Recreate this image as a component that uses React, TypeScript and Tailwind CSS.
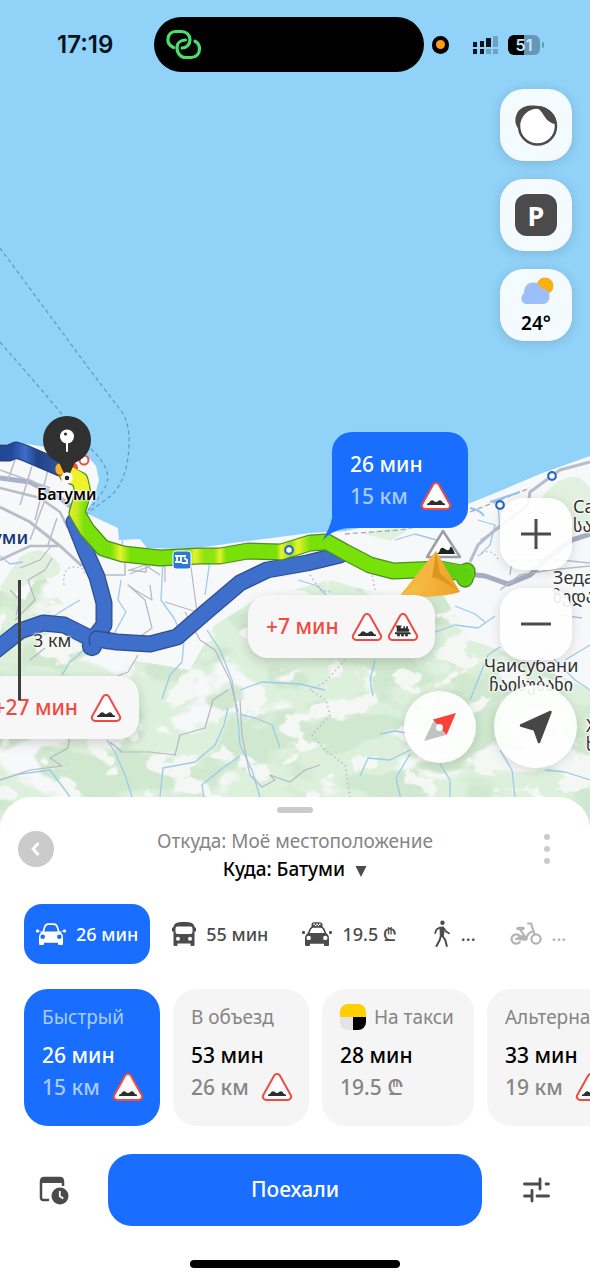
import type { ReactNode } from "react";
import clsx from "clsx";

const MAP_LABEL =
  "absolute whitespace-nowrap [text-shadow:0_0_2px_#fff,0_0_2px_#fff,0_0_3px_#fff,0_0_3px_#fff]";
const FLOATING = "flex items-center justify-center bg-white/90 shadow-[0_2px_12px_rgba(0,0,0,0.14)]";

/* ---------- Icons ---------- */

const RoadSign = ({ kind = "bump", className = "" }: { kind?: "bump" | "train"; className?: string }) => (
  <svg viewBox="0 0 32 28" className={clsx("h-7 w-8 shrink-0", className)} aria-hidden="true">
    <path
      d="M13.2 2.6a3.2 3.2 0 0 1 5.6 0l11 19.6a3.2 3.2 0 0 1-2.800 4.700H5a3.200 3.200 0 0 1-2.800-4.700z"
      fill="#fff"
      stroke="#f04a41"
      strokeWidth="2"
    />
    {kind === "bump" ? (
      <path d="M7 23v-1.500c2.800 0 2.800-3.300 5-3.300s2.200 1.800 4 1.800 1.800-1.800 4-1.800 2.200 3.300 5 3.300V23z" fill="#2e2e2e" />
    ) : (
      <g fill="#2e2e2e">
        <path d="M9 12.500h5.500v1.200h-.7v1.600h2.500v-2h1.600v2h1.200v-2h1.800v2.300c1.500.4 1.800 2.200.8 3.100H9.700v-5H9z" />
        <path d="M8 19.300h15l1 2H8z" />
        <circle cx="11.500" cy="22" r="1.500" />
        <circle cx="15.500" cy="22" r="1.500" />
        <circle cx="19.500" cy="22" r="1.500" />
      </g>
    )}
  </svg>
);

const CarIcon = () => (
  <svg viewBox="0 0 30 22" className="h-[22px] w-[30px]" fill="currentColor" aria-hidden="true">
    <path d="M7 9.500 8.700 4Q9.500 1.300 12 1.100h6q2.500.2 3.300 2.900L23 9.500" fill="none" stroke="currentColor" strokeWidth="1.700" />
    <rect x="0" y="6.500" width="3" height="3" rx="1.200" />
    <rect x="27" y="6.500" width="3" height="3" rx="1.200" />
    <path d="M3 8 6 9M27 8 24 9" stroke="currentColor" strokeWidth=".6" />
    <path
      fillRule="evenodd"
      d="M6 8.500h18q3 2 3 6V21q0 1-1 1h-3q-1 0-1-1v-1.200H8V21q0 1-1 1H4q-1 0-1-1v-6.500q0-4 3-6zM6.700 11.500a2.300 2.300 0 1 0 0 4.600 2.300 2.300 0 0 0 0-4.600zm16.600 0a2.300 2.300 0 1 0 0 4.600 2.300 2.300 0 0 0 0-4.600z"
    />
  </svg>
);

const TaxiIcon = () => (
  <svg viewBox="0 0 30 24" className="h-6 w-[30px]" fill="currentColor" aria-hidden="true">
    <path d="M9.500 5V3Q9.500.3 12.200.3h5.600q2.700 0 2.700 2.700v2z" />
    <path d="M11.500 1.500H13V3h-1.500zM14.300 1.500h1.500V3h-1.500zM17 1.500h1.500V3H17zM13 3h1.300v1.300H13zM15.800 3H17v1.300h-1.200z" fill="#fff" />
    <path d="M6.500 11.500 8.300 7Q9.200 5 11.500 5h7q2.300 0 3.200 2l1.800 4.500" fill="none" stroke="currentColor" strokeWidth="1.700" />
    <rect x="0" y="9" width="3" height="3" rx="1.200" />
    <rect x="27" y="9" width="3" height="3" rx="1.200" />
    <path
      fillRule="evenodd"
      d="M6 11h18q3 1.500 3 5.500V23q0 1-1 1h-3q-1 0-1-1v-1.200H8V23q0 1-1 1H4q-1 0-1-1v-6.500Q3 12.500 6 11zM6.700 13.700a2.200 2.200 0 1 0 0 4.400 2.200 2.200 0 0 0 0-4.400zm16.600 0a2.200 2.200 0 1 0 0 4.400 2.200 2.200 0 0 0 0-4.400z"
    />
  </svg>
);

const BusIcon = () => (
  <svg viewBox="0 0 24 24" className="size-6" fill="currentColor" aria-hidden="true">
    <path
      fillRule="evenodd"
      d="M6 .5Q12-.8 18 .5q4 .7 4.500 4.500L24 6v3.500h-1.500V23q0 1-1 1h-2q-1 0-1-1v-1.500h-13V23q0 1-1 1h-2q-1 0-1-1V9.500H0V6l1.500-1Q2 1.200 6 .5zM5.500 4.500q-2 0-2 2V10q0 2 2 2h13q2 0 2-2V6.500q0-2-2-2zM6 14.800a2 2 0 1 0 0 4 2 2 0 0 0 0-4zm12 0a2 2 0 1 0 0 4 2 2 0 0 0 0-4z"
    />
  </svg>
);

const WalkIcon = () => (
  <svg viewBox="-3 0 20 28" className="h-7 w-5" fill="none" stroke="currentColor" aria-hidden="true">
    <circle cx="8.500" cy="2.800" r="2.200" fill="currentColor" stroke="none" />
    <path d="M6 7.500 9.300 6.800l.7 5.500-1 4.300-2.700-1z" fill="currentColor" strokeWidth="1" strokeLinejoin="round" />
    <path d="M6 7.500 2.500 9.500 1.200 13M10 8.500l2 3 3 1.800" strokeWidth="1.800" strokeLinecap="round" strokeLinejoin="round" />
    <path d="M7 15.500 5.700 20 2.500 26M8.500 16l2.800 4 1.500 6" strokeWidth="2" strokeLinecap="round" strokeLinejoin="round" />
  </svg>
);

const BikeIcon = () => (
  <svg viewBox="0 0 32 24" className="h-6 w-8" fill="none" stroke="currentColor" strokeWidth="2.200" strokeLinecap="round" aria-hidden="true">
    <path d="M9.800 14a4.700 4.700 0 1 0 0 6" />
    <circle cx="26" cy="17" r="4.600" />
    <path d="M6 17h10.500q.5-6 6-7.500M10.500 8l5.500 8M18 1.500h3L24.500 12" />
    <path d="M8 6.500h5" strokeWidth="3.500" />
    <path d="M6 17q5-6 10-1.500V18z" fill="currentColor" strokeWidth="1" />
  </svg>
);

const ScheduleIcon = () => (
  <svg viewBox="0 0 32 32" className="size-8" aria-hidden="true">
    <path d="M11 26H5.500Q3 26 3 23.500v-16Q3 4 6.500 4h15Q25 4 25 7.500V12" fill="none" stroke="#4b4b4b" strokeWidth="2.500" />
    <path d="M3 9V6q0-3 3-3h16q3 0 3 3v3z" fill="#4b4b4b" />
    <circle cx="22" cy="22" r="9.500" fill="#4b4b4b" stroke="#fff" strokeWidth="2" />
    <path d="M21.800 17v5.200l3.500 2.300" fill="none" stroke="#fff" strokeWidth="1.800" />
  </svg>
);

const TuneIcon = () => (
  <svg viewBox="0 0 28 28" className="size-7" fill="none" stroke="#4b4b4b" strokeWidth="2.800" aria-hidden="true">
    <path d="M2.500 8h15M24 8h2.500M18 3v10M2.500 20H10M15 20h11.500M10 14.500V25" strokeLinecap="round" />
  </svg>
);

/* ---------- Map ---------- */

const LAND =
  "M0 444 28 444 60 450 84 452 96 466 99 480 94 498 86 513 118 528 119 540 140 539 147 548 190 549 240 542 310 533 345 531 400 520 468 504 500 491 540 474 590 456V840H0z";
const MAIN_ROUTE =
  "M67 474 80 480 83 493 77 513 87 530 103 548 123 554 160 558 200 556 220 556 248 551 281 552 310 543 327 542 345 552 370 565 393 571 417 570 440 569 467 574";
const ALT_ROUTES = [
  "M-4 650 20 631 43 623 64 625 90 638 117 642 150 644 177 637 207 611 240 583 267 570 307 563 340 555",
  "M74 522 85 550 97 577 104 603 104 625 94 638",
];

const RIVERS = [
  "M0 556 10 564 23 562M125 520 122 545M163 560 161 600 174 618 184 640 182 662 170 675 162 699",
  "M121 580 118 600 126 612 115 632 106 650M80 600 60 612 45 622M90 645 70 662 62 675",
  "M107 740 115 752 125 775 132 797M0 780 20 774 50 770 65 790 70 797M160 797 163 768 195 762 215 745 224 725 228 708",
  "M204 797 202 785 220 770 240 756M210 560 205 595M207 630 220 650 232 680 238 720 240 745 252 770 260 797M240 690 262 682 300 684 325 690",
  "M242 715 255 718 272 725 280 748M298 580 318 586 327 596M375 660 370 680 373 696",
  "M360 776 368 758 390 760 410 750M410 754 396 778 401 800M380 734 395 731 412 734M440 764 450 780 450 800",
  "M435 632 455 625 478 628 495 616M455 606 475 614 485 622M470 700 474 690 488 655 500 647",
  "M500 750 512 770 515 797M545 770 565 772 590 780M565 660 590 645M478 520 495 525 490 545 480 555",
  "M395 540 415 534 440 541M480 540 500 528 498 505M560 615 582 618M545 650 575 680 590 690",
];

const ROADS = [
  "M45 648 30 660M150 585 152 600 135 590 128 585 145 600 152 628 135 640M138 655 128 672 108 680",
  "M190 560 197 612 165 602M130 574 150 566M15 620 35 600 28 580 45 570 52 558",
  "M185 612 200 640 215 650 230 680 238 712M0 780 30 770 62 766 50 758 68 748 70 735",
  "M110 742 122 752 150 752 175 755 180 735 205 728 213 700 228 690",
  "M240 700 242 735 250 775 262 787 275 780 270 775 290 782 305 770 320 765",
  "M130 570 145 565 160 575M165 560 165 582M10 590 20 600 16 615M52 545 40 560 20 568",
];

const Terrain = () => (
  <>
    <rect y="430" width="590" height="410" fill="#f7f8f9" />
    <g clipPath="url(#hills)">
      <rect y="540" width="590" height="300" filter="url(#pale)" />
      <rect y="540" width="590" height="300" filter="url(#wood)" />
      <rect y="540" width="590" height="300" filter="url(#shade)" />
    </g>
    <path d="M20 557q20-14 35 2t-10 20-30 16-15-8zM540 500q20-28 40-22l10 10v40l-20-8-14-20zM365 534q20-8 45-5l-20 12z" fill="#dcefd8" opacity=".8" />
  </>
);

const MapDrawing = () => (
  <svg
    viewBox="0 0 590 829"
    preserveAspectRatio="xMidYMin slice"
    className="absolute inset-x-0 top-0 h-[calc(100%+32px)] w-full"
    aria-hidden="true"
  >
    <defs>
      <clipPath id="land">
        <path d={LAND} />
      </clipPath>
      <clipPath id="hills">
        <path d="M0 590 25 600 40 570 60 600 90 640 130 660 190 670 215 625 255 600 330 580 400 600 440 590 470 640 500 650 590 690V840H0z" />
      </clipPath>
      <filter id="pale" x="0" y="0" width="100%" height="100%" colorInterpolationFilters="sRGB">
        <feTurbulence type="fractalNoise" baseFrequency=".012 .018" numOctaves="4" seed="7" />
        <feColorMatrix values="0 0 0 0 .862  0 0 0 0 .94  0 0 0 0 .86  12 0 0 0 -4.200" />
      </filter>
      <filter id="wood" x="0" y="0" width="100%" height="100%" colorInterpolationFilters="sRGB">
        <feTurbulence type="fractalNoise" baseFrequency=".014 .024" numOctaves="3" seed="21" />
        <feColorMatrix values="0 0 0 0 .815  0 0 0 0 .91  0 0 0 0 .81  12 0 0 0 -5.900" />
      </filter>
      <filter id="shade" x="0" y="0" width="100%" height="100%" colorInterpolationFilters="sRGB">
        <feTurbulence type="fractalNoise" baseFrequency=".025 .036" numOctaves="4" seed="4" />
        <feColorMatrix values="0 0 0 0 .96  0 0 0 0 .97  0 0 0 0 .96  18 0 0 0 -10.600" />
      </filter>
      <linearGradient id="jam" x1="0" x2="1">
        <stop offset="0" stopColor="#1f4795" />
        <stop offset=".25" stopColor="#234a98" />
        <stop offset=".45" stopColor="#3d6dcb" />
        <stop offset=".65" stopColor="#1f4388" />
        <stop offset="1" stopColor="#35549f" />
      </linearGradient>
      <linearGradient id="slow" gradientUnits="userSpaceOnUse" x1="70" x2="310" y1="0" y2="0">
        <stop offset="0" stopColor="#d9f027" />
        <stop offset=".03" stopColor="#c3ea20" />
        <stop offset=".06" stopColor="#78e208" />
        <stop offset=".17" stopColor="#78e208" />
        <stop offset=".21" stopColor="#e4f22e" />
        <stop offset=".25" stopColor="#78e208" />
        <stop offset=".49" stopColor="#78e208" />
        <stop offset=".52" stopColor="#e4f22e" />
        <stop offset=".56" stopColor="#8ee40f" />
        <stop offset=".6" stopColor="#8ee40f" />
        <stop offset=".625" stopColor="#e4f22e" />
        <stop offset=".65" stopColor="#78e208" />
        <stop offset=".86" stopColor="#78e208" />
        <stop offset=".88" stopColor="#e4f22e" />
        <stop offset=".92" stopColor="#8ee40f" />
        <stop offset=".95" stopColor="#e4f22e" />
        <stop offset="1" stopColor="#78e208" />
      </linearGradient>
      <linearGradient id="arrow" x1="0" x2="1">
        <stop offset="0" stopColor="#fbc64e" />
        <stop offset="1" stopColor="#eda126" />
      </linearGradient>
    </defs>

    <rect width="590" height="829" fill="#91d2f8" />
    {/* Ferry lines */}
    <g fill="none" stroke="#5b9bc9" strokeWidth="1.200" strokeDasharray="4 3">
      <path d="M0 248 90 370 122 412Q130 425 129 445 128 478 112 495L86 514" />
      <path d="M0 342 40 388 92 450Q107 464 108 478 106 492 86 512" />
    </g>

    <g clipPath="url(#land)">
      <Terrain />
      <g fill="none" stroke="#9ccbeb" strokeWidth="1.300" strokeLinejoin="round">
        {RIVERS.map((d) => (
          <path key={d} d={d} />
        ))}
      </g>
      <g fill="none" stroke="#b7b6c6" strokeWidth="1.200" strokeLinejoin="round">
        {ROADS.map((d) => (
          <path key={d} d={d} />
        ))}
      </g>
      <path
        d="M345 660 325 682 310 690 326 700 330 715 312 735 325 750 345 765 350 797M375 590 372 575 385 567M310 575 320 590 332 592M478 556q12-10 20 3M64 585q-2-18 10-18t10 8"
        fill="none"
        stroke="#bdb5dc"
        strokeWidth="1.500"
        strokeDasharray="1.500 3"
      />
      <g fill="none" stroke="#b9bcca">
        <path d="M0 478 30 482 60 498 78 512" strokeWidth="5" stroke="#a9b2ca" />
        <path d="M0 507 30 522 60 546 82 566" strokeWidth="3" />
        <path d="M0 488 40 498 60 512 68 528" strokeWidth="2.500" />
        <path d="M0 560 30 546 58 546" strokeWidth="2.500" />
        <path d="M15 460 8 480M32 466 20 505M48 470 35 520M45 500 30 540M57 518 48 545M0 470 50 488M105 575 125 575 125 556M146 556 146 572 128 570" strokeWidth="1.500" />
        <path d="M468 574 485 576 508 584 530 575 548 558 572 540 590 534" stroke="#a5adc0" strokeWidth="5" />
        <path d="M470 562 478 545 495 530 528 505 530 492 560 470 590 462" strokeWidth="3" />
        <path d="M500 590 520 575 550 570 590 566M510 575 512 560 560 560 590 563" strokeWidth="1.500" />
      </g>
      <path d="M345 534 400 530 450 520 500 500 530 488" fill="none" stroke="#aaa9b3" strokeWidth="1.300" strokeDasharray="5 3" />
      <path d="M470 508q10 2 14 8M490 502l30-10" fill="none" stroke="#8fc7ee" strokeWidth="2" />
    </g>

    {/* Alternative routes */}
    <g fill="none" strokeLinejoin="round" strokeLinecap="round">
      {ALT_ROUTES.map((d) => (
        <path key={d} d={d} stroke="#2f4f8f" strokeWidth="17" />
      ))}
      <circle cx="92" cy="646" r="9.500" fill="#3e6fcb" stroke="#2f4f8f" strokeWidth="1.300" />
      {ALT_ROUTES.map((d) => (
        <path key={d} d={d} stroke="#3e6fcb" strokeWidth="14.500" />
      ))}
      <path d="M90 645q-3-12 6-14l14 2" stroke="#2f4f8f" strokeWidth="1.300" />
      <path d="M-4 453H9L16 450 25 453 60 468" stroke="#213d7c" strokeWidth="17" />
      <path d="M-4 453H9L16 450 25 453 60 468" stroke="url(#jam)" strokeWidth="14.500" />
    </g>

    {/* Selected route with slow stretches */}
    <g fill="none" strokeLinejoin="round" strokeLinecap="round">
      <circle cx="84" cy="460" r="4.500" fill="#fff" stroke="#f04a41" strokeWidth="2" />
      <path d={MAIN_ROUTE} stroke="#4f8a25" strokeWidth="17" />
      <circle cx="467" cy="571" r="8" fill="#5fd00f" stroke="#4f8a25" strokeWidth="1.300" />
      <circle cx="465" cy="579" r="8" fill="#5fd00f" stroke="#4f8a25" strokeWidth="1.300" />
      <path d={MAIN_ROUTE} stroke="url(#slow)" strokeWidth="14.500" />
      <path d="M440 569 466 574" stroke="#5fd00f" strokeWidth="14.500" />
      <path d="M62 470 72 468" stroke="#f4512c" strokeWidth="12" />
      <path d="M60 468v2" stroke="#f9b51b" strokeWidth="9" />
      <path d="M70 474 80 480 82 488" stroke="#eef229" strokeWidth="14.500" />
    </g>

    <g fill="#fff" stroke="#2d66c9" strokeWidth="2.200">
      <circle cx="289" cy="550" r="3.800" />
      <circle cx="500" cy="505" r="3.800" />
      <circle cx="552" cy="476" r="3.800" />
    </g>

    {/* Railway station */}
    <rect x="173" y="551" width="18" height="18" rx="3" fill="#2a77dd" stroke="#fff" />
    <path d="M175 556h11M175 562h7M177 556v6M181 556v6M184 558l3 2v3h-5" fill="none" stroke="#fff" strokeWidth="1.800" />

    {/* Bump warning on the route */}
    <path d="M443 531 460 557H427z" fill="#fff" stroke="#9c9da6" strokeWidth="2.500" strokeLinejoin="round" />
    <path d="M435 554q4 0 5-4t5-1 5-1 5 6z" fill="#222" />

    {/* Current position */}
    <path d="M436 551 460 592Q440 598 399 597z" fill="url(#arrow)" />
    <path d="M436 551 440 573 460 592Q447 582 432 577z" fill="#df9620" />
    <path d="M436 551 432 577Q415 584 399 597z" fill="#f5b540" />

    {/* Destination pin */}
    <path d="M67 480 58 460H76z" fill="#303030" />
    <circle cx="67" cy="440" r="24" fill="#303030" />
    <circle cx="67" cy="436.500" r="7" fill="#fff" />
    <circle cx="65.500" cy="434" r="1.600" fill="#303030" />
    <path d="M67 442V451" stroke="#fff" strokeWidth="2" strokeLinecap="round" />
    <circle cx="67" cy="478" r="4" fill="#222" stroke="#fff" strokeWidth="3.500" />
  </svg>
);

const MapLabels = () => (
  <>
    <span className={clsx(MAP_LABEL, "left-[37px] top-[484px] text-base leading-5 font-semibold text-black")}>Батуми</span>
    <span className={clsx(MAP_LABEL, "-left-2 top-[525px] text-lg leading-6 font-semibold text-[#213c78]")}>уми</span>
    <span className={clsx(MAP_LABEL, "left-[33px] top-[628px] text-lg leading-6 text-[#333]")}>3 км</span>
    <span className={clsx(MAP_LABEL, "left-[573px] top-[497px] text-lg leading-[19px] text-[#333]")}>
      Сар
      <br />
      სარ
    </span>
    <span className={clsx(MAP_LABEL, "left-[553px] top-[568px] text-lg leading-[19px] text-[#333]")}>
      Зеда
      <br />
      ზედა
    </span>
    <span className={clsx(MAP_LABEL, "left-[484px] top-[656px] text-center text-lg leading-[19px] text-[#333]")}>
      Чаисубани
      <br />
      ჩაისუბანი
    </span>
    <span className={clsx(MAP_LABEL, "left-[586px] top-[716px] text-lg leading-[19px] text-[#333]")}>
      Х<br />ხ
    </span>
  </>
);

const RouteBubbles = () => (
  <>
    <button className="absolute left-[332px] top-[432px] w-[136px] rounded-[20px] bg-[#196dff] pt-4 pr-4 pb-4 pl-[18px] text-left text-[21px] leading-8 font-medium text-white">
      <svg viewBox="0 0 30 32" className="absolute -left-[10px] top-[78px] h-8 w-[30px]" aria-hidden="true">
        <path d="M10 0v8Q8 18 0 31 12 18 30 18V0z" fill="#196dff" />
      </svg>
      <span className="relative block">26 мин</span>
      <span className="relative flex items-center justify-between">
        <span className="text-[#a9cbff]">15 км</span>
        <RoadSign />
      </span>
    </button>

    <button className="absolute left-[248px] top-[595px] flex h-[63px] w-[187px] items-center rounded-[20px] bg-[#f7f7f7] pl-[18px] text-[21px] font-medium text-[#f04a41] shadow-[0_4px_12px_rgba(0,0,0,0.16)]">
      <span className="mr-3 whitespace-nowrap">+7 мин</span>
      <RoadSign className="mr-1" />
      <RoadSign kind="train" />
    </button>

    <button className="absolute -left-5 top-[676px] flex h-[63px] w-[159px] items-center justify-end rounded-[20px] bg-[#f7f7f7] pr-[17px] text-[21px] font-medium text-[#f04a41] shadow-[0_4px_12px_rgba(0,0,0,0.16)]">
      <span className="mr-3 whitespace-nowrap">+27 мин</span>
      <RoadSign />
    </button>
    <div className="absolute left-[18px] top-[580px] h-[120px] w-[3px] bg-[#3e403e]" />
  </>
);

const StatusBar = () => (
  <header className="relative flex h-[89px] items-start justify-between pt-[17px] pr-[50px] pl-[57px]">
    <time className="flex h-[55px] w-[97px] items-center font-['Inter',sans-serif] text-2xl font-semibold text-[#061420]">17:19</time>
    <div className="flex h-[55px] w-[270px] items-center rounded-full bg-black pl-3">
      <svg viewBox="0 0 36 32" className="h-8 w-9" fill="none" stroke="#4be06c" strokeWidth="3.200" strokeLinecap="round" aria-hidden="true">
        <path d="M7.500 18.500C3 16.500 1.500 13 2 9.500 2.500 5 6 2.500 10 2.500h5.500c5 0 8.500 3.500 8.500 8.200 0 4.800-3.500 8.300-8 8.300" />
        <path d="M19.500 11c-5 0-8.500 3-8.500 8 0 5.500 4 9.500 9 9.500h5c5 0 8.500-3.500 8.500-8.500 0-3.500-1.500-6.500-4.500-7.800" />
      </svg>
    </div>
    <div className="ml-2 flex h-[55px] flex-1 items-center justify-between">
      <span className="flex h-[18px] w-[17px] items-center justify-center rounded-full bg-black">
        <span className="size-[9px] rounded-full bg-[#ff9a18]" />
      </span>
      <svg viewBox="0 0 26 20" className="ml-3 h-5 w-[26px]" fill="#06141f" aria-label="Сигнал" role="img">
        <path d="M1 7h4v5H1zM8 6h4v6H8zM14 3h5v9h-5zM1 14h4v5H1zM8 14h4v5H8z" />
        <path d="M21 1h5v11h-5zM14 14h5v5h-5zM21 14h5v5h-5z" opacity=".25" />
      </svg>
      <span className="relative flex h-5 w-8 items-center justify-center rounded-md bg-[linear-gradient(90deg,#000_51%,#6498b6_51%)] font-['Inter',sans-serif] text-base font-semibold text-[#c5e8fb]">
        51
        <span className="absolute -right-1 h-[6px] w-[2px] rounded-r-full bg-[#6498b6]" />
      </span>
    </div>
  </header>
);

const MapButton = ({ label, children }: { label: string; children: ReactNode }) => (
  <button aria-label={label} className={clsx(FLOATING, "size-[72px] flex-col rounded-3xl")}>
    {children}
  </button>
);

const MapControls = () => (
  <>
    <div className="relative flex flex-col items-end gap-[18px] pr-[18px]">
      <MapButton label="Пробки">
        <svg viewBox="0 0 44 44" className="size-11">
          <path d="M1.500 15Q4 3 17 2.500q14-.8 21 7 5.500 6 4 16l-5 6L8 29q-8-6-6.500-14z" fill="#4b4b4b" />
          <circle cx="23.500" cy="23" r="18.500" fill="#fff" stroke="#4b4b4b" strokeWidth="2.500" />
          <path d="M22 4.800q4 1 8 8 4 7 11.500 8.500Q41 8 28 3.500z" fill="#4b4b4b" />
        </svg>
      </MapButton>
      <MapButton label="Парковки">
        <span className="flex size-[42px] items-center justify-center rounded-xl bg-[#4b4b4b] text-[27px] leading-none font-bold text-white">P</span>
      </MapButton>
      <MapButton label="Погода">
        <svg viewBox="0 0 36 28" className="mt-1 h-7 w-9">
          <circle cx="27" cy="9" r="8.500" fill="#fbb012" />
          <path d="M7 27a6 6 0 0 1-1-10.500C6 9 10 5.500 15 5.500c4.500 0 7 2 8.500 6 5 0 8 3.500 8 8 0 4-2.500 7.500-7 7.500z" fill="#9cbff9" />
        </svg>
        <span className="mt-1 text-[19px] leading-7 font-semibold text-black">24°</span>
      </MapButton>
    </div>

    <div className="relative mt-[157px] flex flex-col items-end gap-[18px] pr-[18px]">
      <MapButton label="Приблизить">
        <svg viewBox="0 0 32 32" className="size-8" stroke="#4b4b4b" strokeWidth="3">
          <path d="M1 16h30M16 1v30" />
        </svg>
      </MapButton>
      <MapButton label="Отдалить">
        <svg viewBox="0 0 32 32" className="size-8" stroke="#4b4b4b" strokeWidth="3">
          <path d="M1 16h30" />
        </svg>
      </MapButton>
    </div>

    <div className="relative mt-[25px] flex items-center justify-end gap-[18px] pr-[13px] pb-[29px]">
      <button aria-label="Компас" className={clsx(FLOATING, "size-[72px] rounded-full")}>
        <svg viewBox="0 0 34 30" className="h-[30px] w-[34px]">
          <path d="M1 29 11 8 23 23z" fill="#c2c2c2" />
          <path d="M33 1 10 7.500 23.500 23z" fill="#f8423a" />
          <circle cx="16.500" cy="15.500" r="3.500" fill="#fff" />
        </svg>
      </button>
      <button aria-label="Моё местоположение" className={clsx(FLOATING, "size-[83px] rounded-full")}>
        <svg viewBox="0 0 34 34" className="size-[34px]" fill="#464646" stroke="#464646" strokeWidth="2.500" strokeLinejoin="round">
          <path d="M31.500 2 20 32l-4.500-12.500L2 15.500z" />
        </svg>
      </button>
    </div>
  </>
);

/* ---------- Bottom sheet ---------- */

const TRANSPORT = [
  { id: "car", label: "26 мин", name: "На машине", icon: <CarIcon />, tone: "bg-[#196dff] text-white" },
  { id: "bus", label: "55 мин", name: "На автобусе", icon: <BusIcon />, tone: "text-[#4b4b4b]" },
  { id: "taxi", label: "19.5 ₾", name: "На такси", icon: <TaxiIcon />, tone: "text-[#4b4b4b]" },
  { id: "walk", label: "...", name: "Пешком", icon: <WalkIcon />, tone: "text-[#4b4b4b]" },
  { id: "bike", label: "...", name: "На велосипеде", icon: <BikeIcon />, tone: "text-[#b4b4b4]" },
];

const ROUTES = [
  { title: "Быстрый", time: "26 мин", note: "15 км", sign: true, width: "w-[136px]", active: true },
  { title: "В объезд", time: "53 мин", note: "26 км", sign: true, width: "w-[136px]" },
  { title: "На такси", time: "28 мин", note: "19.5 ₾", taxi: true, width: "w-[152px]" },
  { title: "Альтернативный", time: "33 мин", note: "19 км", sign: true, width: "w-[136px]" },
];

const TaxiLogo = () => (
  <span className="mr-2 grid size-[26px] shrink-0 grid-cols-2 grid-rows-2 overflow-hidden rounded-lg">
    <span className="col-span-2 bg-[#ffcf00]" />
    <span className="bg-[#e4e4e4]" />
    <span className="bg-black" />
  </span>
);

const RouteCard = ({ title, time, note, sign, taxi, width, active }: (typeof ROUTES)[number]) => (
  <button
    className={clsx(
      "shrink-0 overflow-hidden rounded-3xl px-[18px] pt-[14px] pb-[23px] text-left whitespace-nowrap",
      width,
      active ? "bg-[#196dff]" : "bg-[#f5f5f5]",
    )}
  >
    <span className={clsx("flex items-center text-[19px] leading-7", active ? "text-[#a9cbff]" : "text-[#858585]")}>
      {taxi && <TaxiLogo />}
      {title}
    </span>
    <span className={clsx("mt-2 block text-[21px] leading-8 font-medium", active ? "text-white" : "text-black")}>{time}</span>
    <span className={clsx("flex items-center text-[21px] leading-8 font-medium", active ? "text-[#a9cbff]" : "text-[#858585]")}>
      {note}
      {sign && <RoadSign className="ml-3" />}
    </span>
  </button>
);

const BottomSheet = () => (
  <section className="relative rounded-t-[32px] bg-white pt-[10px] pb-3">
    <div className="mx-auto h-[6px] w-9 rounded-full bg-[#cbcbcb]" />

    <div className="mt-[14px] flex items-start justify-between px-[18px]">
      <button aria-label="Назад" className="mt-1 flex size-9 items-center justify-center rounded-full bg-[#cbcbcb]">
        <svg viewBox="0 0 16 16" className="size-4" fill="none" stroke="#fff" strokeWidth="2.800">
          <path d="M10.500 2 5 8l5.500 6" />
        </svg>
      </button>
      <div className="text-center text-[19px] leading-7">
        <p className="text-[#858585]">Откуда: Моё местоположение</p>
        <button className="font-medium text-black">
          Куда: Батуми
          <svg viewBox="0 0 12 12" className="ml-[10px] inline size-3" fill="#4b4b4b" aria-hidden="true">
            <path d="M.5 1h11L6 12z" />
          </svg>
        </button>
      </div>
      <button aria-label="Ещё" className="mt-1 flex size-9 items-center">
        <svg viewBox="0 0 6 30" className="ml-2 h-[30px] w-[6px]" fill="#cbcbcb">
          <circle cx="3" cy="3" r="3" />
          <circle cx="3" cy="15" r="3" />
          <circle cx="3" cy="27" r="3" />
        </svg>
      </button>
    </div>

    <nav className="mt-[21px] flex gap-[10px] overflow-hidden pl-6">
      {TRANSPORT.map(({ id, label, name, icon, tone }) => (
        <button
          key={id}
          aria-label={name}
          className={clsx("flex h-[60px] shrink-0 items-center gap-[10px] rounded-[18px] px-3 text-lg font-medium whitespace-nowrap", tone)}
        >
          {icon}
          {label}
        </button>
      ))}
    </nav>

    <div className="mt-[25px] flex gap-[13px] overflow-hidden pl-6">
      {ROUTES.map((route) => (
        <RouteCard key={route.title} {...route} />
      ))}
    </div>

    <div className="mt-7 flex items-center">
      <button aria-label="Время выезда" className="flex w-[108px] justify-center">
        <ScheduleIcon />
      </button>
      <button className="h-[72px] flex-1 rounded-3xl bg-[#196dff] text-[21px] font-medium text-white">Поехали</button>
      <button aria-label="Параметры" className="flex w-[108px] justify-center">
        <TuneIcon />
      </button>
    </div>

    <div className="mx-auto mt-[34px] h-2 w-[210px] rounded-full bg-black" />
  </section>
);

export default function App() {
  return (
    <main className="min-h-screen overflow-hidden bg-white font-['Noto_Sans','DejaVu_Sans',sans-serif]">
      <section className="relative" aria-label="Карта">
        <MapDrawing />
        <MapLabels />
        <RouteBubbles />
        <StatusBar />
        <MapControls />
      </section>
      <BottomSheet />
    </main>
  );
}
